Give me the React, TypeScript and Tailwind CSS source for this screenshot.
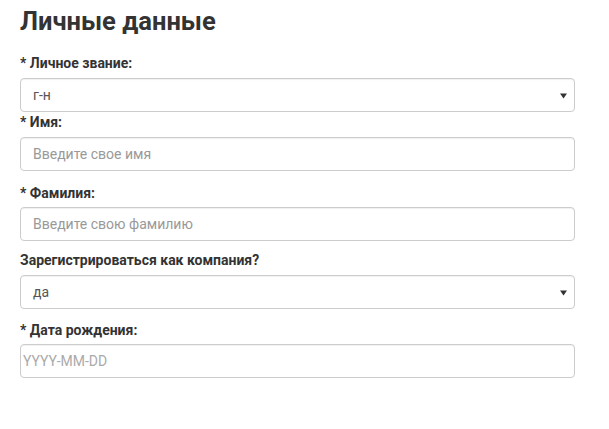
import React from "react";

const labelCls = "block h-5 text-[14px] leading-5 font-bold text-[#333]";
const boxCls =
  "block w-[555px] h-[34px] rounded-[4px] border border-[#ccc] bg-white text-[14px] text-[#555] outline-none shadow-[inset_0_1px_1px_rgba(0,0,0,0.06)]";

function Caret() {
  return (
    <svg
      className="absolute right-[7px] top-[14px]"
      width="7"
      height="6"
      viewBox="0 0 7 6"
    >
      <path d="M0 0.5h7L3.5 5.5z" fill="#333" />
    </svg>
  );
}

function SelectBox({ value }: { value: string }) {
  return (
    <div className={`relative ${boxCls} px-3 leading-[32px]`}>
      {value}
      <Caret />
    </div>
  );
}

export default function App() {
  return (
    <div
      className="w-[609px] h-[429px] bg-white pl-5"
      style={{ fontFamily: "Roboto, 'Noto Sans', sans-serif" }}
    >
      <h2 className="pt-[7px] text-[25.5px] leading-[28px] font-bold text-[#333]">
        Личные данные
      </h2>

      <label className={`${labelCls} mt-[18px]`}>* Личное звание:</label>
      <div className="mt-[5px]">
        <SelectBox value="г-н" />
      </div>

      <label className={labelCls} htmlFor="firstname">
        * Имя:
      </label>
      <input
        id="firstname"
        className={`${boxCls} mt-[5px] px-3 placeholder:text-[#999]`}
        placeholder="Введите свое имя"
        type="text"
      />

      <label className={`${labelCls} mt-[12px]`} htmlFor="lastname">
        * Фамилия:
      </label>
      <input
        id="lastname"
        className={`${boxCls} mt-[4px] px-3 placeholder:text-[#999]`}
        placeholder="Введите свою фамилию"
        type="text"
      />

      <label className={`${labelCls} mt-[9px]`}>Зарегистрироваться как компания?</label>
      <div className="mt-[5px]">
        <SelectBox value="да" />
      </div>

      <label className={`${labelCls} mt-[11px]`} htmlFor="birthdate">
        * Дата рождения:
      </label>
      <input
        id="birthdate"
        className={`${boxCls} mt-[4px] px-[2px] placeholder:text-[#aaa]`}
        placeholder="YYYY-MM-DD"
        type="text"
      />
    </div>
  );
}
